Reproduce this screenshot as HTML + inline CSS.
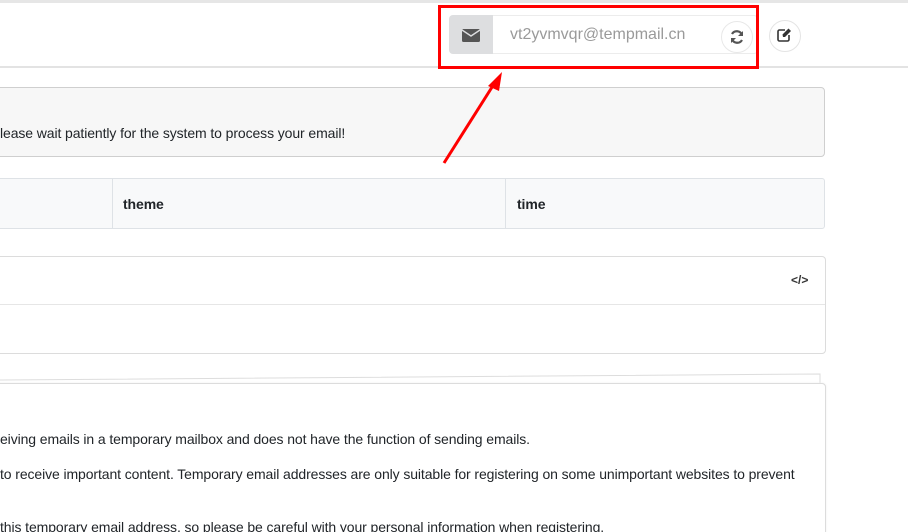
<!DOCTYPE html>
<html><head><style>
html,body{margin:0;width:908px;height:532px;overflow:hidden}
body{background:#fff;font-family:"Liberation Sans",sans-serif;position:relative;color:#212529}
.a{position:absolute}
.t{font-size:14px;letter-spacing:-0.1px;white-space:nowrap}
</style></head><body>
<div class="a" style="left:0;top:0;width:908px;height:3px;background:#e6e6e6"></div>
<div class="a" style="left:0;top:66px;width:908px;height:2px;background:#e3e3e3"></div>
<div class="a" style="left:449px;top:15px;width:44px;height:39px;background:#dddee0;border-radius:4px 0 0 4px"></div>
<svg class="a" style="left:462px;top:29px" width="18" height="13" viewBox="0 0 18 13"><rect x="0" y="0" width="18" height="13" rx="1.5" fill="#555"/><path d="M0 1 L9 7 L18 1" stroke="#dddee0" stroke-width="1.4" fill="none"/></svg>
<div class="a" style="left:493px;top:15px;width:264px;height:37px;border:1px solid #ececec;border-left:none;border-radius:0 4px 4px 0"></div>
<div class="a" style="left:510px;top:26px;font-size:16px;color:#9a9a9a">vt2yvmvqr@tempmail.cn</div>
<div class="a" style="left:721px;top:21px;width:30px;height:30px;border:1px solid #e8e8e8;border-radius:50%;background:#fff"></div>
<svg class="a" style="left:729px;top:29px" width="16" height="16" viewBox="0 0 16 16"><path d="M13 6A5.5 5.5 0 0 0 3 5" stroke="#555" stroke-width="2.2" fill="none"/><path d="M3 10A5.5 5.5 0 0 0 13 11" stroke="#555" stroke-width="2.2" fill="none"/><path d="M14 2v5h-5z M2 14v-5h5z" fill="#555"/></svg>
<div class="a" style="left:769px;top:20px;width:30px;height:30px;border:1px solid #e4e4e4;border-radius:50%"></div>
<svg class="a" style="left:776px;top:27px" width="16" height="16" viewBox="0 0 16 16"><path d="M9 3H3.5A1.5 1.5 0 0 0 2 4.5v8A1.5 1.5 0 0 0 3.5 14h8a1.5 1.5 0 0 0 1.5-1.5V8" stroke="#333" stroke-width="1.6" fill="none"/><path d="M7 10l-.5-2.5L12.5 1.5 15 4 9 10z" fill="#333"/></svg>
<div class="a" style="left:438px;top:5px;width:315px;height:58px;border:3px solid #f00"></div>
<div class="a" style="left:-5px;top:87px;width:828px;height:68px;background:#f7f7f7;border:1px solid #cfcfcf;border-radius:4px"></div>
<div class="a t" style="left:0;top:125px">lease wait patiently for the system to process your email!</div>
<div class="a" style="left:-5px;top:178px;width:828px;height:49px;background:#f8f9fa;border:1px solid #dee2e6;border-radius:3px"></div>
<div class="a" style="left:112px;top:179px;width:1px;height:49px;background:#dee2e6"></div>
<div class="a" style="left:505px;top:179px;width:1px;height:49px;background:#dee2e6"></div>
<div class="a t" style="left:123px;top:196px;font-weight:bold">theme</div>
<div class="a t" style="left:517px;top:196px;font-weight:bold">time</div>
<div class="a" style="left:-5px;top:256px;width:829px;height:96px;border:1px solid #dcdcdc;border-radius:4px"></div>
<div class="a" style="left:0;top:304px;width:825px;height:1px;background:#e6e6e6"></div>
<div class="a" style="left:791px;top:273px;font-size:12px;font-weight:bold;color:#333">&lt;/&gt;</div>
<svg class="a" style="left:0;top:370px" width="830" height="20"><path d="M0 10 L820 4 L820 14" stroke="#ddd" fill="none"/></svg>
<div class="a" style="left:-5px;top:383px;width:829px;height:160px;border:1px solid #dcdcdc;border-radius:4px;background:#fff;box-shadow:0 0 2px #eee"></div>
<div class="a t" style="left:0;top:431px">eiving emails in a temporary mailbox and does not have the function of sending emails.</div>
<div class="a t" style="left:0;top:466px">to receive important content. Temporary email addresses are only suitable for registering on some unimportant websites to prevent</div>
<div class="a t" style="left:0;top:519px">this temporary email address, so please be careful with your personal information when registering.</div>
<svg class="a" style="left:0;top:0" width="908" height="532"><line x1="444" y1="163" x2="494" y2="84" stroke="#f00" stroke-width="3"/><path d="M502 72 L488 86 L499 91z" fill="#f00"/></svg>
</body></html>
